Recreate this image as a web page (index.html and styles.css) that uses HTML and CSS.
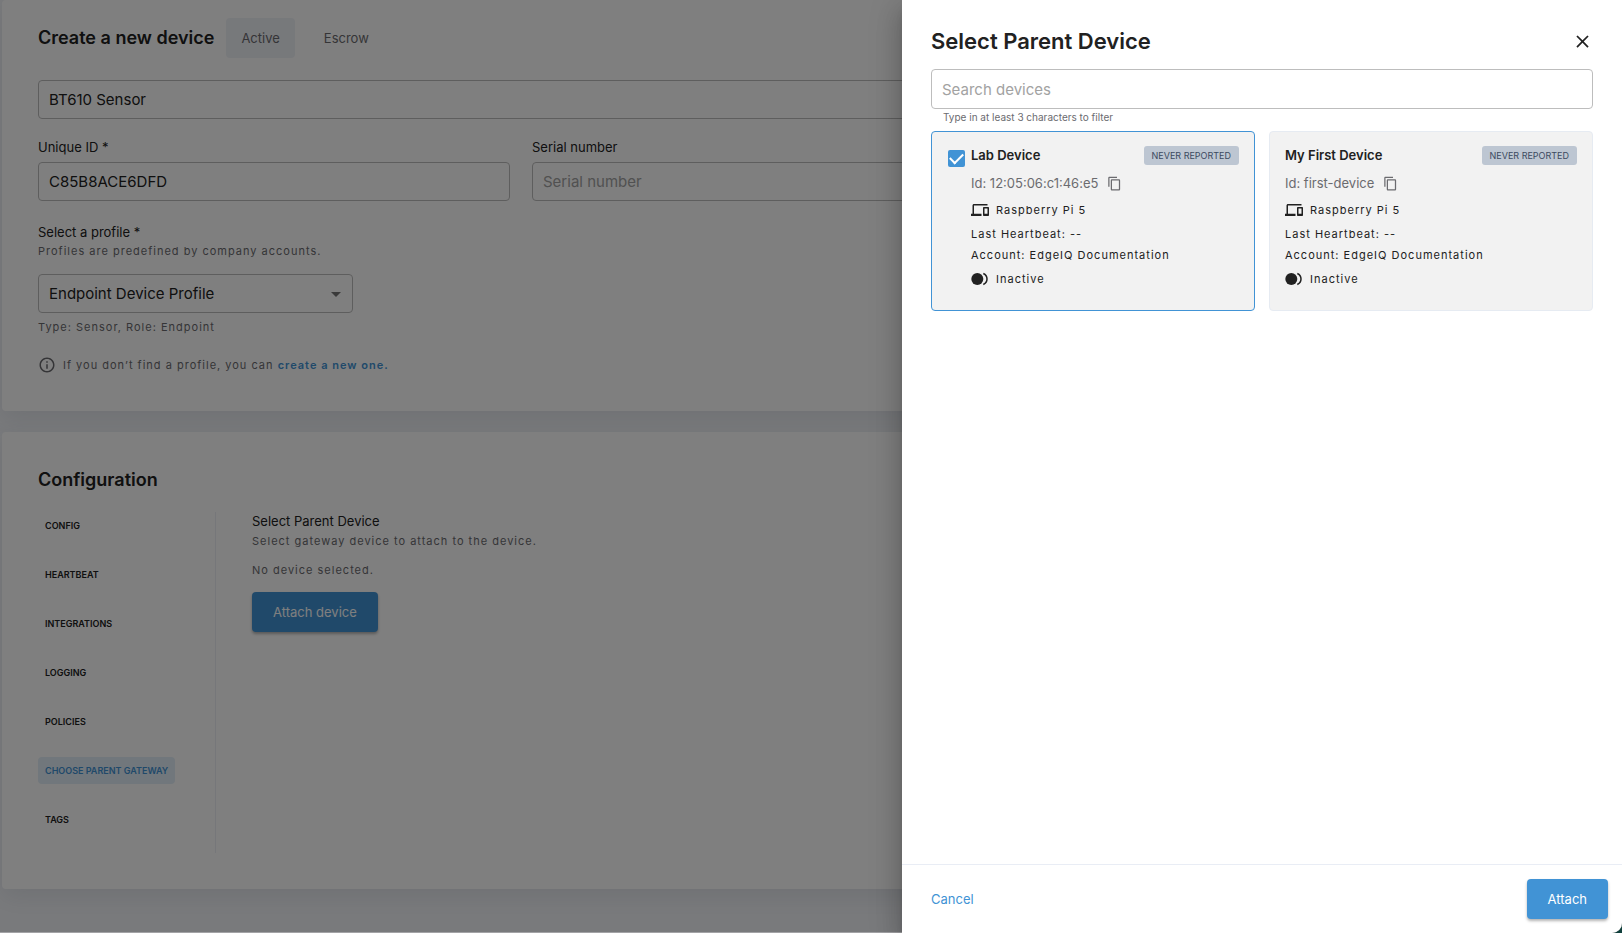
FILE: index.html
```html
<!DOCTYPE html>
<html lang="en">
<head>
<meta charset="utf-8">
<meta name="viewport" content="width=device-width, initial-scale=1">
<title>Create a new device</title>
<link rel="stylesheet" href="styles.css">
</head>
<body>
<svg class="sprite" aria-hidden="true">
  <symbol id="icon-copy" viewBox="0 0 24 24"><path d="M16 1H4c-1.100 0-2 .9-2 2v14h2V3h12V1zm3 4H8c-1.100 0-2 .9-2 2v14c0 1.100.9 2 2 2h11c1.100 0 2-.9 2-2V7c0-1.100-.9-2-2-2zm0 16H8V7h11v14z"/></symbol>
  <symbol id="icon-devices" viewBox="0 0 24 24"><path d="M4 6h18V4H4c-1.100 0-2 .9-2 2v11H0v3h14v-3H4V6zm19 2h-6c-.55 0-1 .45-1 1v10c0 .55.45 1 1 1h6c.55 0 1-.45 1-1V9c0-.55-.45-1-1-1zm-1 9h-4v-7h4v7z"/></symbol>
  <symbol id="icon-inactive" viewBox="0 0 18 14"><circle cx="6.300" cy="7" r="6"/><path d="M12.300 1.500c2.200 1 3.700 3.100 3.700 5.500s-1.500 4.500-3.700 5.500" fill="none" stroke="currentColor" stroke-width="1.500"/></symbol>
</svg>
<div class="app">
  <main class="page">
    <section class="card">
      <div class="head">
        <h1 class="title">Create a new device</h1>
        <div class="tabs">
          <button class="tab tab-on" type="button">Active</button>
          <button class="tab" type="button">Escrow</button>
        </div>
      </div>
      <input class="field" type="text" value="BT610 Sensor" aria-label="Name">
      <div class="columns">
        <div class="group">
          <label class="label" for="uid">Unique ID *</label>
          <input class="field" id="uid" type="text" value="C85B8ACE6DFD">
        </div>
        <div class="group">
          <label class="label" for="serial">Serial number</label>
          <input class="field" id="serial" type="text" placeholder="Serial number">
        </div>
      </div>
      <div class="profile">
        <label class="label" for="profile">Select a profile *</label>
        <p class="caption">Profiles are predefined by company accounts.</p>
        <div class="select-box">
          <select class="field select" id="profile"><option>Endpoint Device Profile</option></select>
          <svg class="caret" viewBox="0 0 24 24" aria-hidden="true"><path d="M7 10l5 5 5-5z"/></svg>
        </div>
        <p class="caption">Type: Sensor, Role: Endpoint</p>
      </div>
      <div class="hint">
        <svg class="info" viewBox="0 0 24 24" aria-hidden="true"><path d="M11 7h2v2h-2zm0 4h2v6h-2zm1-9C6.480 2 2 6.480 2 12s4.480 10 10 10 10-4.480 10-10S17.520 2 12 2zm0 18c-4.410 0-8-3.590-8-8s3.590-8 8-8 8 3.590 8 8-3.590 8-8 8z"/></svg>
        <p class="caption">If you don’t find a profile, you can <a class="link" href="#new">create a new one.</a></p>
      </div>
    </section>

    <section class="card config">
      <h2 class="title">Configuration</h2>
      <div class="config-body">
        <nav class="nav">
          <a class="nav-item" href="#config">CONFIG</a>
          <a class="nav-item" href="#heartbeat">HEARTBEAT</a>
          <a class="nav-item" href="#integrations">INTEGRATIONS</a>
          <a class="nav-item" href="#logging">LOGGING</a>
          <a class="nav-item" href="#policies">POLICIES</a>
          <a class="nav-item nav-on" href="#gateway">CHOOSE PARENT GATEWAY</a>
          <a class="nav-item" href="#tags">TAGS</a>
        </nav>
        <div class="panel">
          <h3 class="label">Select Parent Device</h3>
          <p class="caption">Select gateway device to attach to the device.</p>
          <p class="caption empty">No device selected.</p>
          <button class="button" type="button">Attach device</button>
        </div>
      </div>
    </section>
  </main>

  <div class="overlay"></div>

  <aside class="drawer" role="dialog" aria-label="Select Parent Device">
    <div class="drawer-main">
      <header class="drawer-head">
        <h2 class="drawer-title">Select Parent Device</h2>
        <button class="close" type="button" aria-label="Close"><svg viewBox="0 0 24 24"><path d="M19 6.410L17.590 5 12 10.590 6.410 5 5 6.410 10.590 12 5 17.590 6.410 19 12 13.410 17.590 19 19 17.590 13.410 12z"/></svg></button>
      </header>
      <input class="field" type="text" placeholder="Search devices" aria-label="Search devices" aria-describedby="search-help">
      <p class="help" id="search-help">Type in at least 3 characters to filter</p>
      <div class="devices">
        <article class="device device-on">
          <input class="check" type="checkbox" checked aria-label="Lab Device">
          <div class="device-body">
            <div class="device-head"><h3 class="device-name">Lab Device</h3><span class="badge">NEVER REPORTED</span></div>
            <div class="device-id">Id: 12:05:06:c1:46:e5 <button class="copy" type="button" aria-label="Copy id"><svg><use href="#icon-copy"/></svg></button></div>
            <div class="row"><svg class="row-icon"><use href="#icon-devices"/></svg>Raspberry Pi 5</div>
            <div class="line">Last Heartbeat: --</div>
            <div class="line">Account: EdgeIQ Documentation</div>
            <div class="row"><svg class="row-icon"><use href="#icon-inactive"/></svg>Inactive</div>
          </div>
        </article>
        <article class="device">
          <div class="device-body">
            <div class="device-head"><h3 class="device-name">My First Device</h3><span class="badge">NEVER REPORTED</span></div>
            <div class="device-id">Id: first-device <button class="copy" type="button" aria-label="Copy id"><svg><use href="#icon-copy"/></svg></button></div>
            <div class="row"><svg class="row-icon"><use href="#icon-devices"/></svg>Raspberry Pi 5</div>
            <div class="line">Last Heartbeat: --</div>
            <div class="line">Account: EdgeIQ Documentation</div>
            <div class="row"><svg class="row-icon"><use href="#icon-inactive"/></svg>Inactive</div>
          </div>
        </article>
      </div>
    </div>
    <footer class="drawer-foot">
      <button class="cancel" type="button">Cancel</button>
      <button class="button" type="button">Attach</button>
    </footer>
  </aside>
</div>
</body>
</html>
```

FILE: styles.css
```css
* { box-sizing: border-box; margin: 0; }

body {
  background: #10403c;
  color: #212121;
  font-family: Inter, "Liberation Sans", sans-serif;
  font-size: 13px;
  line-height: 20px;
}

button, input, select { font: inherit; color: inherit; }
button { border: 0; background: none; padding: 0; cursor: pointer; }
svg { display: block; fill: currentColor; }

.sprite { position: absolute; width: 0; height: 0; }

.app {
  position: relative;
  height: 100vh;
  overflow: hidden;
  border-bottom-right-radius: 10px;
  background: #f3f5f9;
}

/* Page behind the drawer */
.page { padding: 0 88px 0 2px; }

.card {
  padding: 18px 36px 37px;
  border-radius: 4px;
  background: #fff;
  box-shadow: 0 8px 24px rgba(60, 66, 90, 0.1);
}

.config { margin-top: 21px; padding: 35px 36px 36px; }

.head { display: flex; align-items: center; gap: 12px; margin-bottom: 22px; }
.title { font-size: 18px; line-height: 26px; font-weight: 600; }

.tabs { display: flex; gap: 14px; }
.tab {
  height: 40px;
  padding: 0 15px;
  border-radius: 4px;
  color: #6b6b6f;
}
.tab-on { background: #eff2f7; }

.field {
  display: block;
  width: 100%;
  height: 39px;
  padding: 0 10px;
  border: 1px solid #bdbdbd;
  border-radius: 4px;
  background: transparent;
  font-size: 15px;
}
.field::placeholder { color: #a2a2a2; opacity: 1; }

.columns {
  display: grid;
  grid-template-columns: repeat(3, 1fr);
  gap: 22px;
  margin-top: 18px;
}
.label { display: block; font-size: 13px; line-height: 20px; font-weight: 400; }
.group .label { margin-bottom: 5px; }

.caption { font-size: 11px; line-height: 18px; color: #6b6b6f; letter-spacing: 1px; }

.profile { margin-top: 21px; }
.select-box { position: relative; width: 315px; margin: 14px 0 5px; }
.select { appearance: none; padding-right: 32px; }
.caret { position: absolute; top: 8px; right: 5px; width: 24px; height: 24px; color: #757575; pointer-events: none; }

.hint { display: flex; align-items: center; gap: 7px; margin-top: 20px; }
.info { width: 18px; height: 18px; color: #6b6b6f; }
.link { color: #4193d5; font-weight: 600; text-decoration: none; }

.config-body { display: flex; margin-top: 19px; }
.nav {
  display: flex;
  flex-direction: column;
  align-items: flex-start;
  gap: 22px;
  width: 178px;
  min-height: 341px;
  border-right: 1px solid #eceff5;
}
.nav-item {
  padding: 0 7px;
  border-radius: 4px;
  color: inherit;
  font-size: 9px;
  line-height: 27px;
  font-weight: 600;
  text-decoration: none;
}
.nav-on { background: #e3eef8; color: #4193d5; }

.panel { padding-left: 36px; }
.panel .label { margin-bottom: 2px; line-height: 18px; }
.empty { margin: 11px 0 13px; }

.button {
  height: 40px;
  padding: 0 21px;
  border-radius: 4px;
  background: #4193d5;
  color: #fff;
  font-size: 13px;
  box-shadow: 0 2px 3px rgba(0, 0, 0, 0.3);
}

.overlay { position: absolute; inset: 0; border-bottom: 1px solid #a3a3a6; background: rgba(0, 0, 0, 0.5); }

/* Drawer */
.drawer {
  position: absolute;
  top: 0;
  right: 0;
  bottom: 0;
  display: flex;
  flex-direction: column;
  width: 720px;
  background: #fff;
  box-shadow: 0 8px 10px -5px rgba(0, 0, 0, 0.2), 0 16px 24px 2px rgba(0, 0, 0, 0.14), 0 6px 30px 5px rgba(0, 0, 0, 0.12);
}
.drawer-main { flex: 1; padding: 26px 29px 0; }
.drawer-head { display: flex; justify-content: space-between; align-items: center; margin-bottom: 13px; }
.drawer-title { font-size: 22px; line-height: 30px; font-weight: 600; }
.close { color: #212121; }
.close svg { width: 21px; height: 21px; }
.drawer .field { height: 40px; }

.help { margin: 0 12px 6px; font-size: 10px; line-height: 16px; color: #6b6b6f; }

.devices { display: grid; grid-template-columns: 1fr 1fr; gap: 14px; }
.device {
  display: flex;
  gap: 6px;
  padding: 14px 15px 17px;
  border: 1px solid #e6ebf2;
  border-radius: 4px;
  background: #f2f2f2;
}
.device-on { border-color: #4193d5; padding-left: 16px; }
.device-body { flex: 1; }
.device-head { display: flex; justify-content: space-between; }
.device-name { font-size: 13px; line-height: 19px; font-weight: 600; }
.badge {
  padding: 0 8px;
  border-radius: 3px;
  background: #bdc6d2;
  color: #3c4a60;
  font-size: 9px;
  line-height: 19px;
}
.device-id { display: flex; align-items: center; gap: 9px; margin: 8px 0 7px; font-size: 13px; line-height: 20px; color: #6b6b6f; }
.copy svg { width: 15px; height: 15px; }

.check {
  appearance: none;
  display: grid;
  place-items: center;
  width: 17px;
  height: 17px;
  margin-top: 4px;
  border-radius: 2px;
  background: #4193d5;
}
.check::after {
  content: "";
  width: 11px;
  height: 6px;
  margin-bottom: 3px;
  border: solid #fff;
  border-width: 0 0 2px 2px;
  transform: rotate(-45deg);
}

.row { display: flex; align-items: center; gap: 7px; margin: 3px 0 4px; font-size: 11px; line-height: 20px; letter-spacing: 1px; }
.device-id + .row { margin-top: 0; }
.row-icon { width: 18px; height: 18px; }
.line { font-size: 11px; line-height: 21px; letter-spacing: 1px; }

.drawer-foot {
  display: flex;
  justify-content: space-between;
  align-items: center;
  padding: 14px 14px 14px 29px;
  border-top: 1px solid #e9edf5;
}
.cancel { color: #4193d5; }
```
